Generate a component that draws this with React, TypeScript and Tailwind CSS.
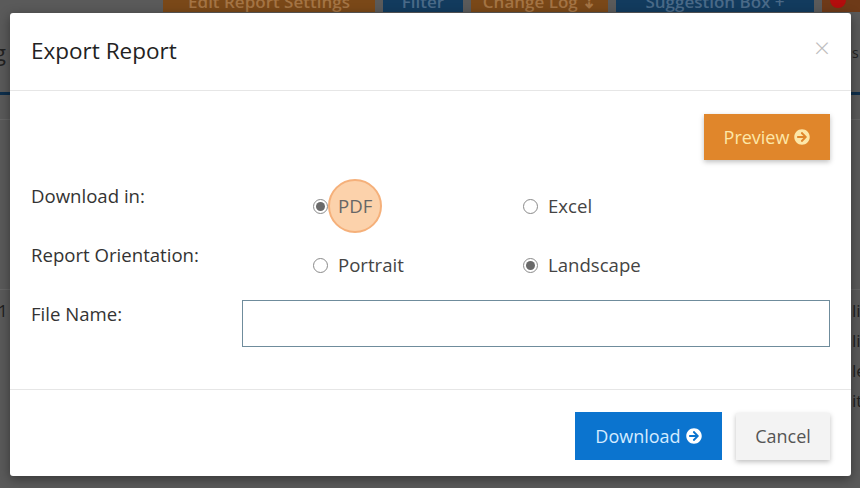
import { FaArrowCircleRight } from "react-icons/fa";

function Radio({ label, checked, highlight }: { label: string; checked?: boolean; highlight?: boolean }) {
    return (
        <label className="flex items-center w-[210px] h-6">
            <span className="w-[15px] h-[15px] rounded-full border border-[#8a8a8a] bg-white flex items-center justify-center">
                {checked && <span className="w-[9px] h-[9px] rounded-full bg-[#6a6a6a]" />}
            </span>
            <span className="relative ml-[10px] text-[#444]">
                {highlight && (
                    <span className="absolute left-[-10px] top-[-15px] w-[54px] h-[54px] rounded-full bg-[#fcd2ab] border-2 border-[#f5b07a]" />
                )}
                <span className={highlight ? "relative text-[#666]" : "relative"}>{label}</span>
            </span>
        </label>
    );
}

export default function App() {
    return (
        <div className="relative w-[860px] h-[488px] overflow-hidden bg-[#5a5a5a] font-['Open_Sans',sans-serif]">
            {/* page behind the modal */}
            <div className="flex flex-col">
                <div className="flex items-end h-[12px] overflow-hidden pl-[163px] gap-[8px] text-[17px] font-semibold">
                    <div className="w-[212px] h-[28px] shrink-0 bg-[#7a4818] text-[#a47444] pt-[8px] text-center leading-[20px]">Edit Report Settings</div>
                    <div className="w-[80px] h-[28px] shrink-0 bg-[#123b5e] text-[#4a6a88] pt-[8px] text-center leading-[20px]">Filter</div>
                    <div className="w-[137px] h-[28px] shrink-0 bg-[#7a4818] text-[#a47444] pt-[8px] text-center leading-[20px]">Change Log ⇣</div>
                    <div className="w-[198px] h-[28px] shrink-0 bg-[#123b5e] text-[#4a6a88] pt-[8px] text-center leading-[20px]">Suggestion Box +</div>
                    <div className="w-[40px] h-[28px] shrink-0 bg-[#6e3a18] flex items-end pl-[8px] pb-[4px]">
                        <span className="w-[16px] h-[16px] rounded-full bg-[#b30d0d]" />
                    </div>
                </div>
                <div className="h-[80px] flex justify-between items-center text-[22px] text-[#222]">
                    <span className="-ml-[6px]">g</span>
                    <span className="w-[8px] overflow-hidden text-[14px]">s</span>
                </div>
                <div className="h-[3px] bg-[#0e2f4c]" />
                <div className="h-[25px] border-b border-[#666]" />
                <div className="h-[170px] border-b border-[#666]" />
                <div className="flex justify-between text-[17px] text-[#1e1e1e] leading-[30px] mt-[6px]">
                    <span className="-ml-[2px]">1</span>
                    <span className="w-[8px] overflow-hidden">li</span>
                </div>
                <div className="flex justify-end text-[17px] text-[#1e1e1e] leading-[30px]">
                    <span className="w-[8px] overflow-hidden">li</span>
                </div>
                <div className="flex justify-end text-[17px] text-[#1e1e1e] leading-[30px]">
                    <span className="w-[8px] overflow-hidden">le</span>
                </div>
                <div className="flex justify-end text-[17px] text-[#1e1e1e] leading-[30px]">
                    <span className="w-[8px] overflow-hidden">it</span>
                </div>
            </div>

            {/* modal */}
            <div className="absolute left-[10px] top-[13px] w-[841px] h-[463px] bg-white rounded-[3px] shadow-[0_3px_12px_rgba(0,0,0,0.4)] flex flex-col text-[18.6px] text-[#333]">
                <div className="h-[78px] border-b border-[#e6e6e6] flex items-center justify-between pl-[21px] pr-[21px]">
                    <h1 className="text-[22.5px] text-[#222] -mt-[2px]">Export Report</h1>
                    <span className="text-[28px] text-[#bdbdbd] font-light leading-none -mt-[10px]">×</span>
                </div>
                <div className="h-[299px] border-b border-[#e6e6e6] pt-[23px] px-[21px] flex flex-col">
                    <div className="flex justify-end">
                        <button className="h-[46px] w-[126px] bg-[#e0862b] text-[#fde7a8] text-[18px] flex items-center justify-center gap-[5px] shadow-[0_2px_5px_rgba(0,0,0,0.25)]">
                            Preview
                            <FaArrowCircleRight className="text-[16px] text-[#fde7a8]" />
                        </button>
                    </div>
                    <div className="flex mt-[24px] leading-6">
                        <div className="w-[211px]">Download in:</div>
                        <div className="flex pt-[10px] pl-[71px]">
                            <Radio label="PDF" checked highlight />
                            <Radio label="Excel" />
                        </div>
                    </div>
                    <div className="flex mt-[25px] leading-6">
                        <div className="w-[211px]">Report Orientation:</div>
                        <div className="flex pt-[10px] pl-[71px]">
                            <Radio label="Portrait" />
                            <Radio label="Landscape" checked />
                        </div>
                    </div>
                    <div className="flex mt-[23px] leading-6">
                        <div className="w-[211px] pt-[2px]">File Name:</div>
                        <input className="flex-1 h-[47px] border border-[#6f8c9c] outline-none px-3" />
                    </div>
                </div>
                <div className="flex-1 flex justify-end items-start pt-[22px] pr-[21px] gap-[14px] text-[18px]">
                    <button className="h-[48px] w-[147px] bg-[#0b74cf] text-[#d3ebff] flex items-center justify-center gap-[5px]">
                        Download
                        <FaArrowCircleRight className="text-[16px] text-white" />
                    </button>
                    <button className="h-[47px] w-[94px] mt-[1px] bg-[#f3f3f3] text-[#555] shadow-[0_2px_5px_rgba(0,0,0,0.25)]">
                        Cancel
                    </button>
                </div>
            </div>
        </div>
    );
}
